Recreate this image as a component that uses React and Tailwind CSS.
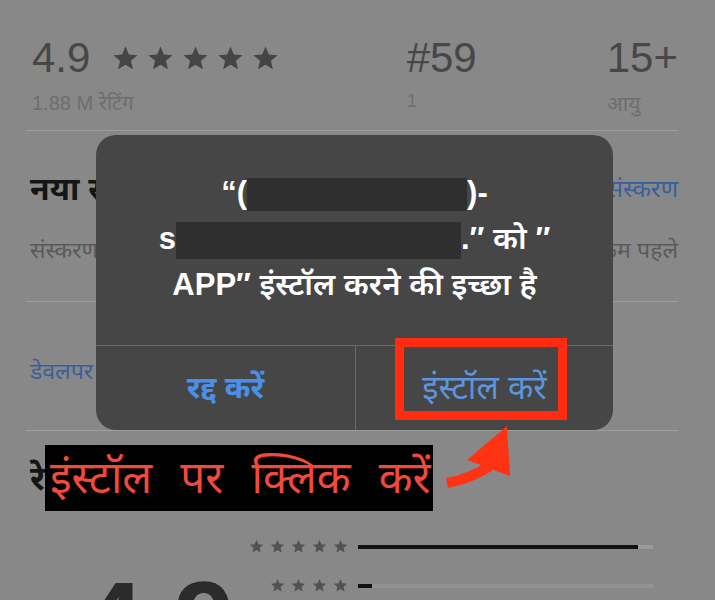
import React from "react";

const FONT = {
  fontFamily:
    '"Liberation Sans", "Noto Sans Devanagari", "Lohit Devanagari", "FreeSans", "Noto Sans", sans-serif',
};

function Star({ size, className }) {
  return (
    <svg width={size} height={size} viewBox="0 0 24 24" className={className}>
      <path
        d="M12 17.6L18.6 21.6l-1.75-7.5L22.7 9.1l-7.7-.65L12 1.4 9 8.45l-7.7.65 5.85 5l-1.75 7.5z"
        fill="currentColor"
      />
    </svg>
  );
}

export default function App() {
  return (
    <div
      className="relative w-[715px] h-[600px] overflow-hidden bg-[#888888] text-[#3f3f3f]"
      style={FONT}
    >
      <div className="ml-[26px] w-[652px] flex flex-col">
        {/* stats */}
        <div className="h-[131px] border-b border-[#9c9c9c] pt-[37px] pl-[6px] flex">
          <div className="w-[380px] flex flex-col">
            <div className="flex items-center h-[42px]">
              <span className="w-[80px] text-[42px] leading-[42px] text-[#474747]">4.9</span>
              <div className="flex gap-[8px] text-[#454545]">
                <Star size={27} />
                <Star size={27} />
                <Star size={27} />
                <Star size={27} />
                <Star size={27} />
              </div>
            </div>
            <span className="mt-[12px] text-[20px] leading-[24px] text-[#6e6e6e]">1.88 M रेटिंग</span>
          </div>
          <div className="w-[203px] flex flex-col">
            <span className="text-[42px] leading-[42px] text-[#474747]">#59</span>
            <span className="mt-[10px] text-[19px] leading-[24px] text-[#6e6e6e]">1</span>
          </div>
          <div className="flex flex-col">
            <span className="text-[42px] leading-[42px] text-[#474747]">15+</span>
            <span className="mt-[12px] text-[21px] leading-[26px] text-[#6e6e6e]">आयु</span>
          </div>
        </div>

        {/* new version */}
        <div className="h-[171px] border-b border-[#9c9c9c] pl-[4px] flex flex-col">
          <div className="mt-[38px] flex items-center justify-between">
            <span className="text-[32px] leading-[40px] font-bold text-[#151515]">नया संस्करण</span>
            <span className="text-[24px] leading-[30px] text-[#3a5f9e]">इतिहास संस्करण</span>
          </div>
          <div className="mt-[26px] flex items-center justify-between">
            <span className="text-[23px] leading-[30px] text-[#5a5a5a]">संस्करण 2.4.1</span>
            <span className="text-[23px] leading-[30px] text-[#5a5a5a]">1 सप्ताह से कम पहले</span>
          </div>
        </div>

        {/* developer */}
        <div className="h-[129px] border-b border-[#9c9c9c] pl-[4px] flex items-center">
          <span className="mt-[10px] text-[23px] leading-[30px] text-[#3a5f9e]">डेवलपर वेबसाइट</span>
        </div>

        {/* ratings heading */}
        <div className="mt-[14px] pl-[4px] flex items-center h-[66px]">
          <span className="text-[34px] font-bold text-[#151515] leading-[40px]">रे</span>
          <span className="h-[66px] w-[388px] bg-black flex items-center pl-[5px] text-[44px] text-[#f04a3c] [word-spacing:16px] leading-[50px] whitespace-nowrap overflow-hidden">
            इंस्टॉल पर क्लिक करें
          </span>
        </div>

        {/* rating bars */}
        <div className="flex">
          <div className="w-[220px] pl-[56px] pt-[54px] text-[110px] leading-[110px] font-bold text-[#2b2b2b]">
            4.9
          </div>
          <div className="flex flex-col pt-[28px] gap-[24px]">
            <div className="flex items-center">
              <div className="w-[102px] flex justify-end gap-[6px] text-[#525252]">
                <Star size={15} />
                <Star size={15} />
                <Star size={15} />
                <Star size={15} />
                <Star size={15} />
              </div>
              <div className="ml-[10px] w-[295px] h-[4px] bg-[#9a9a9a] flex">
                <div className="w-[280px] h-full bg-[#111]" />
              </div>
            </div>
            <div className="flex items-center">
              <div className="w-[102px] flex justify-end gap-[6px] text-[#525252]">
                <Star size={15} />
                <Star size={15} />
                <Star size={15} />
                <Star size={15} />
              </div>
              <div className="ml-[10px] w-[295px] h-[4px] bg-[#939393] flex">
                <div className="w-[14px] h-full bg-[#111]" />
              </div>
            </div>
          </div>
        </div>
      </div>

      {/* dialog overlay */}
      <div className="absolute left-[96px] top-[135px] w-[517px] h-[295px] rounded-[20px] bg-[#464646] flex flex-col overflow-hidden">
        <div className="h-[210px] pt-[35px] text-center text-white text-[31px] leading-[46px] font-semibold">
          <div>
            “(<span className="inline-block align-middle w-[220px] h-[33px] bg-[#2f2f2f]" />)-
          </div>
          <div>
            s<span className="inline-block align-middle w-[285px] h-[37px] bg-[#2f2f2f]" />.″ को ″
          </div>
          <div>APP″ इंस्टॉल करने की इच्छा है</div>
        </div>
        <div className="flex-1 flex border-t border-[#6a6a6a]">
          <div className="w-[260px] flex items-center justify-center border-r border-[#6a6a6a] text-[31px] font-bold text-[#4b8fe6]">
            रद्द करें
          </div>
          <div className="flex-1 flex items-center justify-center text-[33px] text-[#5b95dc]">
            इंस्टॉल करें
          </div>
        </div>
      </div>

      {/* red highlight box */}
      <div className="absolute left-[395px] top-[338px] w-[172px] h-[82px] border-[9px] border-[#ff2c12]" />

      {/* red arrow */}
      <svg className="absolute left-[440px] top-[420px]" width="80" height="70" viewBox="0 0 80 70">
        <path d="M7 63 Q30 59 50 46" stroke="#ff3214" strokeWidth="10" fill="none" />
        <polygon points="67,6 27,40 70,56" fill="#ff3214" />
      </svg>
    </div>
  );
}
